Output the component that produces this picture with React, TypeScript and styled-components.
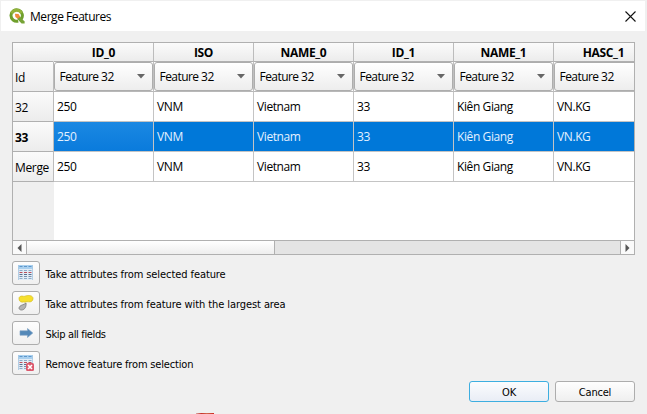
import React from 'react';
import styled, { createGlobalStyle, css } from 'styled-components';

const GlobalStyle = createGlobalStyle`
  * { box-sizing: border-box; }
  html, body { margin: 0; padding: 0; background: #f0f0f0; overflow: hidden; }
`;

const Window = styled.div`
  position: relative;
  width: 647px;
  height: 414px;
  overflow: hidden;
  background: #f0f0f0;
  color: #000;
  font: 12px/16px 'Open Sans', 'Noto Sans', sans-serif;
  white-space: pre;
`;

const TitleBar = styled.header`
  display: flex;
  align-items: center;
  height: 31px;
  margin: 0 2px 11px 1px;
  padding: 0 9px 0 8px;
  background: #fff;
  border-top: 1px solid #f0f0f0;
`;

const Title = styled.h1`
  flex: 1;
  margin: 0 0 0 5px;
  padding-top: 2px;
  font-size: 12px;
  font-weight: 400;
  letter-spacing: -0.45px;
`;

const Frame = styled.section`
  width: 623px;
  height: 213px;
  margin-left: 12px;
  border: 1px solid #b0b0b0;
  background: #fff;
  display: flex;
  flex-direction: column;
`;

const Grid = styled.div`
  flex: 1;
  display: grid;
  grid-template-columns: 41px repeat(5, 100px) 81px;
  grid-template-rows: 19px repeat(4, 30px) 1fr;
  overflow: hidden;
`;

const raised = css`
  background: linear-gradient(#fbfbfb, #ececec);
  border-right: 1px solid #bcbcbc;
  border-bottom: 1px solid #b0b0b0;
`;

const Corner = styled.div`
  ${raised}
  border-right-color: transparent;
  background-clip: border-box;
`;

const ColumnHeader = styled.div`
  ${raised}
  display: flex;
  justify-content: center;
  width: 100px;
  font-size: 12px;
  font-weight: 700;
  line-height: 19px;
  letter-spacing: -0.35px;
`;

const RowHeader = styled.div<{ $bold?: boolean }>`
  ${raised}
  padding-left: 2px;
  line-height: 31px;
  font-size: 12px;
  letter-spacing: -0.35px;
  font-weight: ${(p) => (p.$bold ? 700 : 400)};
`;

const Cell = styled.div<{ $selected?: boolean; $current?: boolean }>`
  padding-left: 3px;
  line-height: 30px;
  height: 30px;
  letter-spacing: -0.4px;
  border-right: 1px solid #c4c4c4;
  border-bottom: 1px solid #c4c4c4;
  color: ${(p) => (p.$selected ? '#e4f1ff' : '#000')};
  background: ${(p) =>
    p.$current ? 'linear-gradient(#1b88e2, #0a7bdc)' : p.$selected ? '#0078d9' : '#fff'};
`;

const Combo = styled.div`
  display: flex;
  align-items: center;
  justify-content: space-between;
  width: 99px;
  height: 29px;
  padding: 0 7px 0 4.5px;
  border: 1px solid #adadad;
  border-radius: 3px;
  background: linear-gradient(#fff, #ededed);
  letter-spacing: -0.55px;
`;

const ComboCell = styled.div`
  height: 30px;
  border-bottom: 1px solid #b8b8b8;
  border-right: 1px solid #c0c0c0;
  overflow: hidden;
`;

const Filler = styled.div<{ $header?: boolean }>`
  grid-column: ${(p) => (p.$header ? '1' : '2 / -1')};
  background: ${(p) => (p.$header ? '#efefef' : '#fff')};
`;

const ScrollBar = styled.div`
  display: flex;
  height: 14px;
  border-top: 1px solid #b0b0b0;
  background: #e4e4e4;
`;

const ScrollButton = styled.div<{ $end?: boolean }>`
  display: flex;
  align-items: center;
  justify-content: center;
  width: 14px;
  background: #fafafa;
  border-${(p) => (p.$end ? 'left' : 'right')}: 1px solid #b0b0b0;
  margin-left: ${(p) => (p.$end ? 'auto' : '0')};
`;

const Thumb = styled.div`
  width: 248px;
  border-right: 1px solid #b0b0b0;
  background: linear-gradient(#fff, #eeeeee);
`;

const Actions = styled.section`
  display: flex;
  flex-direction: column;
  gap: 6px;
  margin: 6px 0 0 12px;
  font: 11px/24px 'DejaVu Sans Condensed', 'DejaVu Sans', sans-serif;
  font-stretch: condensed;
`;

const Action = styled.div<{ $spacing: number }>`
  display: flex;
  height: 24px;
  gap: 5.5px;
  line-height: 27px;
  letter-spacing: ${(p) => p.$spacing}px;
`;

const ToolButton = styled.button`
  display: flex;
  align-items: center;
  justify-content: center;
  width: 28px;
  height: 24px;
  padding: 0;
  border: 1px solid #adadad;
  border-radius: 3px;
  background: linear-gradient(#fdfdfd, #f0f0f0);
`;

const Footer = styled.footer`
  display: flex;
  justify-content: flex-end;
  gap: 6px;
  margin: 6px 12px 0 0;
`;

const PushButton = styled.button<{ $primary?: boolean }>`
  width: 80px;
  height: 21px;
  padding: 1px 0 0;
  border: 1px solid ${(p) => (p.$primary ? '#3daee0' : '#adadad')};
  border-radius: 3px;
  background: ${(p) =>
    p.$primary ? 'linear-gradient(#fbfcfe, #e9edf5)' : 'linear-gradient(#fefefe, #efefef)'};
  color: #000;
  font: 11px/19px 'DejaVu Sans Condensed', 'DejaVu Sans', sans-serif;
  font-stretch: condensed;
  letter-spacing: -0.2px;
`;

const StraySwatch = styled.div`
  position: absolute;
  left: 196px;
  bottom: 0;
  width: 18px;
  height: 1px;
  background: linear-gradient(90deg, #d8a8a4, #c83028 30%, #d06a50 60%, #d02820);
`;

const Logo = () => (
  <svg width="16" height="16" viewBox="0 0 16 16">
    <path d="M12.1 11.1A5.7 5.7 0 1 0 9.2 13" fill="none" stroke="#6f9f2c" strokeWidth="3" />
    <path d="M2.6 5.4A5.7 5.7 0 0 1 12.6 5" fill="none" stroke="#93b23b" strokeWidth="3" />
    <path d="M8.6 8.6L11 8.7L15.6 13.4V15.5H12.6L8.5 11.3Z" fill="#76a336" />
    <path d="M6 5.7L9.5 6L11.2 8.8L8.8 10.8L6.4 9Z" fill="#ee8b3c" />
  </svg>
);

const TableIcon = ({ remove }: { remove?: boolean }) => (
  <svg width="16" height="16" viewBox="1 1 16 16">
    <path d="M1 1H16V16H1Z" fill="#e2ecf6" />
    <path d="M1 1H16V5H1Z" fill="#a9d0ef" />
    <path d="M2.5 2.5H5.5M7 2.5H10M11.5 2.5H14.5" stroke="#5f97ca" />
    <path d="M2.5 6.5H5.5M7 6.5H10M11.5 6.5H14.5M2.5 14.5H5.5M7 14.5H10M11.5 14.5H14.5" stroke="#8cabc8" />
    <path d="M2.5 8.5H5.5M7 8.5H10M11.5 8.5H14.5" stroke="#b8505c" />
    <path d="M2.5 10.5H5.5M7 10.5H10M11.5 10.5H14.5" stroke="#566d8c" />
    <path d="M2.5 12.5H5.5M7 12.5H10M11.5 12.5H14.5" stroke="#7890ac" />
    <path d="M1.5 1V16M15.5 1V16" stroke="#a8c8e2" strokeWidth=".8" />
    {remove && (
      <>
        <rect x="9" y="9" width="8" height="8" rx="1.5" fill="#dc586c" />
        <path d="M11 11L15 15M15 11L11 15" stroke="#fff" strokeWidth="1.6" />
      </>
    )}
  </svg>
);

const AreaIcon = () => (
  <svg width="16" height="16" viewBox="0.5 0.5 16 16">
    <path
      d="M1.5 4.5C1.2 1.9 3.6 1.2 5.5 1.7C7 2.2 7.3 1.5 9 1.2C12 .6 15.5 1.2 15.5 4C15.5 6.5 13.5 7.8 11 7.3C9 6.9 8 8 6 7.5C4 8 1.7 7.2 1.5 4.5Z"
      fill="#f6df2c"
      stroke="#d4bd22"
      strokeWidth=".7"
    />
    <path
      d="M8.5 8.5C9 11.5 7.6 15.5 4 15.5C1.4 15.5 .9 13.3 2.4 11.8C3.8 10.3 6 10.5 8.5 8.5Z"
      fill="#b3b3b3"
      stroke="#777"
      strokeWidth=".8"
    />
  </svg>
);

const ArrowIcon = () => (
  <svg width="16" height="16" viewBox="0 0 16 16">
    <path d="M2 5.8H9.5V3.5L14.8 8L9.5 12.5V10.2H2Z" fill="#5388b8" stroke="#7aa0c2" strokeWidth=".6" />
  </svg>
);

const columns = ['ID_0', 'ISO', 'NAME_0', 'ID_1', 'NAME_1', 'HASC_1'];
const values = ['250', 'VNM', 'Vietnam', '33', 'Kiên Giang', 'VN.KG'];
const rows = ['32', '33', 'Merge'];

const actions = [
  { label: 'Take attributes from selected feature', icon: <TableIcon />, spacing: -0.08 },
  { label: 'Take attributes from feature with the largest area', icon: <AreaIcon />, spacing: -0.08 },
  { label: 'Skip all fields', icon: <ArrowIcon />, spacing: -0.35 },
  { label: 'Remove feature from selection', icon: <TableIcon remove />, spacing: -0.17 },
];

export default function App() {
  return (
    <>
      <GlobalStyle />
      <Window>
        <TitleBar>
          <Logo />
          <Title>Merge Features</Title>
          <svg width="11" height="11" viewBox="0 0 11 11">
            <path d="M.5 .5L10.5 10.5M10.5 .5L.5 10.5" stroke="#111" strokeWidth="1.1" />
          </svg>
        </TitleBar>
        <Frame>
          <Grid>
            <Corner />
            {columns.map((name) => (
              <ColumnHeader key={name}>{name}</ColumnHeader>
            ))}
            <RowHeader>Id</RowHeader>
            {columns.map((name) => (
              <ComboCell key={name}>
                <Combo>
                  Feature 32
                  <svg width="8" height="5" viewBox="0 0 8 5">
                    <path d="M0 0H8L4 4.5Z" fill="#666" />
                  </svg>
                </Combo>
              </ComboCell>
            ))}
            {rows.map((row) => {
              const selected = row === '33';
              return (
                <React.Fragment key={row}>
                  <RowHeader $bold={selected}>{row}</RowHeader>
                  {values.map((value, i) => (
                    <Cell key={i} $selected={selected} $current={selected && i === 0}>
                      {value}
                    </Cell>
                  ))}
                </React.Fragment>
              );
            })}
            <Filler $header />
            <Filler />
          </Grid>
          <ScrollBar>
            <ScrollButton>
              <svg width="5" height="8" viewBox="0 0 5 8">
                <path d="M4.5 0V8L.5 4Z" fill="#555" />
              </svg>
            </ScrollButton>
            <Thumb />
            <ScrollButton $end>
              <svg width="5" height="8" viewBox="0 0 5 8">
                <path d="M.5 0V8L4.5 4Z" fill="#555" />
              </svg>
            </ScrollButton>
          </ScrollBar>
        </Frame>
        <Actions>
          {actions.map((a) => (
            <Action key={a.label} $spacing={a.spacing}>
              <ToolButton aria-label={a.label}>{a.icon}</ToolButton>
              <span>{a.label}</span>
            </Action>
          ))}
        </Actions>
        <Footer>
          <PushButton $primary>OK</PushButton>
          <PushButton>Cancel</PushButton>
        </Footer>
        <StraySwatch />
      </Window>
    </>
  );
}
